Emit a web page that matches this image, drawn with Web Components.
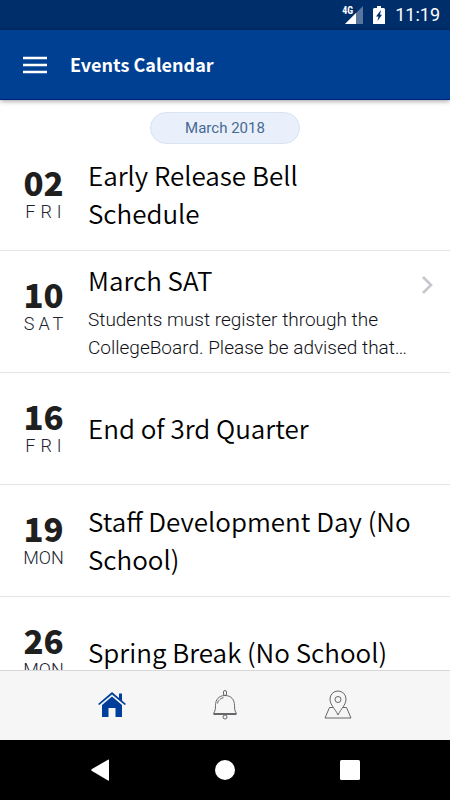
<!DOCTYPE html>
<html lang="en">
<head>
<meta charset="utf-8">
<meta name="viewport" content="width=device-width, initial-scale=1">
<title>Events Calendar</title>
<style>
  :root {
    --brand: #004093;
    --brand-dark: #002e6b;
    --rule: #e4e4e6;
    --display: "Noto Sans CJK SC", "Noto Sans", sans-serif;
    --body: Roboto, "Noto Sans", sans-serif;
  }
  html, body { height: 100%; }
  body { margin: 0; background: #fff; font-family: var(--body); }
</style>
</head>
<body>
<events-app></events-app>

<script>
const define = (name, html, setup) => {
  const template = document.createElement("template");
  template.innerHTML = html;
  customElements.define(name, class extends HTMLElement {
    constructor() {
      super();
      this.attachShadow({ mode: "open" }).append(template.content.cloneNode(true));
    }
    connectedCallback() { if (setup) setup(this, this.shadowRoot); }
  });
};

define("status-bar", `
  <style>
    :host { display: flex; flex: none; align-items: center; justify-content: flex-end; height: 30px;
      padding-right: 10px; background: var(--brand-dark); color: #fff; font: 400 18px/32px var(--body); }
    svg { display: block; }
    .net { display: flex; align-items: flex-start; height: 20px; }
    .net span { font: 700 10px/12px "Roboto Condensed", var(--body); margin-right: -8px; }
    .battery { margin: 0 10px 0 10px; }
  </style>
  <div class="net"><span>4G</span>
    <svg width="18" height="20" viewBox="0 0 18 20" aria-hidden="true">
      <path d="M18 1V19H0z" fill="#fff" opacity=".35"/><path d="M11 8V19H0z" fill="#fff"/>
    </svg></div>
  <svg class="battery" width="12" height="18" viewBox="0 0 12 18" aria-hidden="true">
    <path d="M4 0h4v2h3l1 1v15H0V3l1-1h3z" fill="#fff"/><path d="M8 4 3 10.500h2.500L4.500 15 9 8.800H7z" fill="#002e6b"/>
  </svg>
  <time>11:19</time>`);

define("app-header", `
  <style>
    :host { display: flex; flex: none; align-items: center; gap: 23px; height: 69px; padding: 0 23px; z-index: 1;
      background: var(--brand); color: #fff; border-bottom: 1px solid #00207c; box-shadow: 0 1px 5px rgba(0,0,0,.4); }
    button { display: block; border: 0; padding: 0; background: none; color: inherit; }
    svg { display: block; }
    h1 { margin: 0; padding-bottom: 2px; font: 700 18px/28px var(--display); }
  </style>
  <button aria-label="Open menu"><svg width="24" height="18" viewBox="0 0 24 18">
    <path d="M0 2h24M0 9h24M0 16h24" stroke="currentColor" stroke-width="2.600"/></svg></button>
  <h1><slot></slot></h1>`);

define("month-label", `
  <style>
    :host { display: flex; justify-content: center; padding-top: 12px; margin-bottom: -5px; }
    h2 { box-sizing: border-box; min-width: 150px; margin: 0; padding: 0 24px; border: 1px solid #d9e5f4; border-radius: 16px;
      background: #e9f0fb; color: #466a92; font: 400 15px/30px var(--body); text-align: center; }
  </style>
  <h2><slot></slot></h2>`);

define("event-date", `
  <style>
    :host { display: block; width: 41px; flex: none; padding-top: 25px; text-align: center; }
    .num { font: 900 33px/36px var(--display); color: #1f1f1f; }
    .day { display: flex; justify-content: center; font: 300 18px/24px var(--body); color: #222230; }
    :host([day="FRI"]) .day { letter-spacing: 5px; margin-right: -5px; }
    :host([day="SAT"]) .day { letter-spacing: 4px; margin-right: -4px; }
  </style>
  <div class="num"></div><div class="day"></div>`,
  (el, root) => {
    root.querySelector(".num").textContent = el.getAttribute("num");
    root.querySelector(".day").textContent = el.getAttribute("day");
  });

define("event-row", `
  <style>
    :host { display: flex; flex: none; box-sizing: border-box; min-height: 112px; padding-left: 23px; border-bottom: 1px solid var(--rule); }
    .text { flex: 1; min-width: 0; align-self: center; padding: 10px 0 12px 24px; }
    h3 { margin: 0; font: 350 26px/38px var(--display); color: #000; }
    ::slotted(p) { margin: 7px 0 -2px; font: 300 19px/28px var(--body); color: #111118; }
    .more { flex: none; width: 38px; padding-top: 24px; }
    button { display: none; border: 0; padding: 0 0 0 9px; background: none; }
    :host([more]) button { display: block; }
    svg { display: block; }
  </style>
  <event-date></event-date>
  <div class="text"><h3></h3><slot></slot></div>
  <div class="more"><button aria-label="Show details"><svg width="12" height="20" viewBox="0 0 12 20">
    <path d="M2 2l8 8-8 8" fill="none" stroke="#c7c7cc" stroke-width="2.600"/></svg></button></div>`,
  (el, root) => {
    const date = root.querySelector("event-date");
    date.shadowRoot.querySelector(".num").textContent = el.getAttribute("num");
    date.shadowRoot.querySelector(".day").textContent = el.getAttribute("day");
    date.setAttribute("num", el.getAttribute("num"));
    date.setAttribute("day", el.getAttribute("day"));
    root.querySelector("h3").textContent = el.getAttribute("name");
  });

define("tab-bar", `
  <style>
    :host { display: flex; flex: none; box-sizing: border-box; height: 70px; padding: 0 56px; background: #f6f6f6; border-top: 1px solid #d8d8da; }
    button { flex: 1; display: grid; place-items: center; border: 0; padding: 0 0 2px; background: none; }
    svg { display: block; fill: none; stroke: #66666b; stroke-width: 1; }
    .home { fill: #003f9a; stroke: none; }
  </style>
  <button aria-label="Home" aria-current="page"><svg class="home" width="28" height="30" viewBox="0 0 28 30">
    <path d="M14 2 0 14l1.300 1L14 4.500 26.700 15l1.300-1-4-3.400V3.500h-3v4.500z"/><path d="M14 6.500 4 15v12h6.500v-9h7v9H24V15z"/></svg></button>
  <button aria-label="Notifications"><svg width="26" height="30" viewBox="0 0 26 30">
    <rect x="11.500" y=".5" width="3" height="5" rx="1.500"/><path d="M13 5.500C6.500 5.500 3.500 10 3.500 15.500c0 4-.5 6-2 8h23c-1.500-2-2-4-2-8 0-5.500-3-10-9.500-10z"/>
    <path d="M1.500 24.500h23"/><circle cx="13" cy="27" r="2"/><path d="M5.500 13.500c.5-3 2.500-5 6-5.800" stroke-dasharray="4 1"/></svg></button>
  <button aria-label="Map"><svg width="28" height="30" viewBox="0 0 28 30">
    <path d="M14 25c-3-6.500-8-10-8-16a8 8 0 0 1 16 0C22 15 17 18.500 14 25z"/><circle cx="14" cy="9.500" r="3"/>
    <path d="M9 17.500H5.500L1 28h26l-4.500-10.500H19"/></svg></button>`);

define("system-nav", `
  <style>
    :host { display: flex; flex: none; height: 60px; padding: 0 38px; background: #000; }
    button { flex: 1; display: grid; place-items: center; border: 0; padding: 0; background: none; }
    svg { display: block; fill: #fff; }
  </style>
  <button aria-label="Back"><svg width="20" height="22" viewBox="0 0 20 22"><path d="M19 1v20q0 1-1 .5L2 12q-1.500-1 0-2L18 .7q1-.5 1 .3z"/></svg></button>
  <button aria-label="Home screen"><svg width="20" height="20" viewBox="0 0 20 20"><circle cx="10" cy="10" r="10"/></svg></button>
  <button aria-label="Recent apps"><svg width="20" height="20" viewBox="0 0 20 20"><rect width="20" height="20" rx="1.500"/></svg></button>`);

define("events-app", `
  <style>
    :host { display: flex; flex-direction: column; height: 100vh; overflow: hidden; }
    main { flex: 1; min-height: 0; overflow: hidden; display: flex; flex-direction: column; }
  </style>
  <status-bar></status-bar>
  <app-header>Events Calendar</app-header>
  <main>
    <month-label>March 2018</month-label>
    <event-row num="02" day="FRI" name="Early Release Bell Schedule"></event-row>
    <event-row num="10" day="SAT" name="March SAT" more><p>Students must register through the CollegeBoard. Please be advised that…</p></event-row>
    <event-row num="16" day="FRI" name="End of 3rd Quarter"></event-row>
    <event-row num="19" day="MON" name="Staff Development Day (No School)"></event-row>
    <event-row num="26" day="MON" name="Spring Break (No School)"></event-row>
  </main>
  <tab-bar></tab-bar>
  <system-nav></system-nav>`);
</script>
</body>
</html>
